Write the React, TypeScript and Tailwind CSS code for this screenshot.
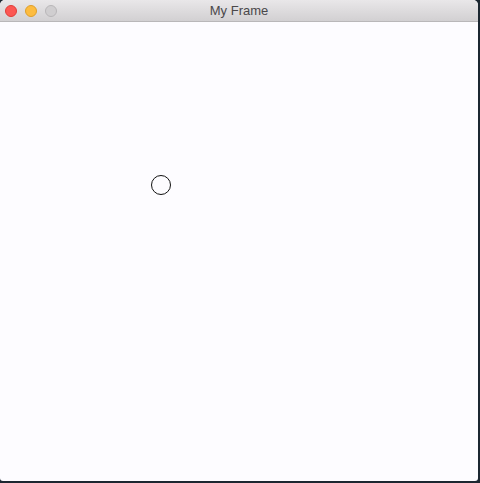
import React from 'react';

export default function App() {
  return (
    <div className="w-[480px] h-[483px] bg-[#1c2731]">
      <div className="w-[478px] h-[481px] rounded-t-[5px] rounded-b-[3px] overflow-hidden flex flex-col bg-[#fdfcff]">
        {/* Title bar */}
        <div className="relative h-[22px] shrink-0 flex items-center px-[5px] gap-[8px] bg-gradient-to-b from-[#e9e7e9] to-[#d2d0d2] border-b border-[#b9b7b9]">
          <span className="w-[12px] h-[12px] rounded-full bg-[#fc5753] border border-[#df3d38]" />
          <span className="w-[12px] h-[12px] rounded-full bg-[#fdbc40] border border-[#de9f2a]" />
          <span className="w-[12px] h-[12px] rounded-full bg-[#d0ced0] border border-[#b8b6b8]" />
          <span
            className="absolute left-0 right-0 text-center text-[13px] text-[#4a484a] leading-none"
            style={{ fontFamily: '"Liberation Sans", Arial, sans-serif' }}
          >
            My Frame
          </span>
        </div>

        {/* Canvas */}
        <div className="relative flex-1">
          <div className="absolute left-[151px] top-[153px] w-[20px] h-[20px] rounded-full border border-[#111]" />
        </div>
      </div>
    </div>
  );
}
